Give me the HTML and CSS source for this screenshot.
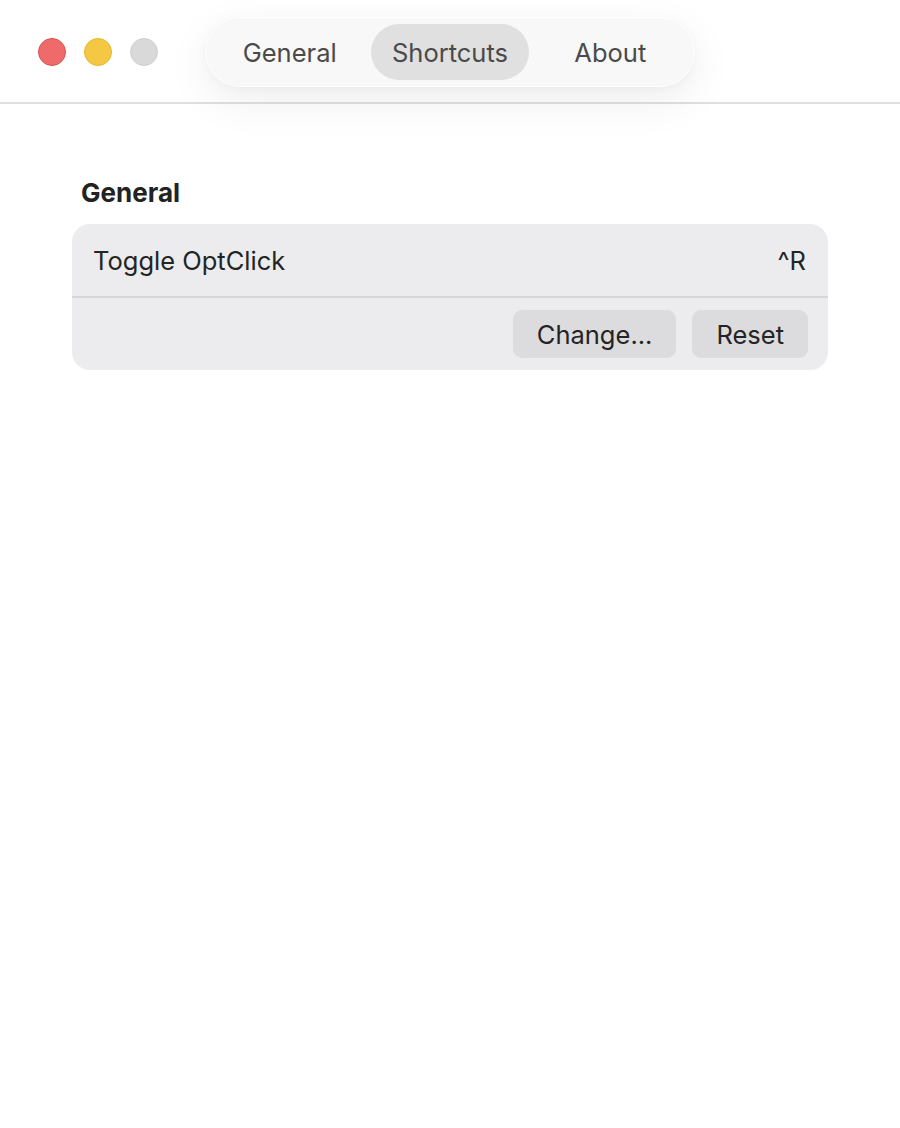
FILE: index.html
```html
<!DOCTYPE html>
<html lang="en">
  <head>
    <meta charset="UTF-8" />
    <meta name="viewport" content="width=device-width, initial-scale=1.0" />
    <title>OptClick Settings</title>
    <link rel="stylesheet" href="styles.css">
  </head>

  <body>
    <div class="window">
      <!-- title bar -->
      <header class="titlebar">
        <div class="lights">
          <span class="light light-close"></span>
          <span class="light light-min"></span>
          <span class="light light-zoom"></span>
        </div>
        <nav class="tabs">
          <span class="tab">General</span>
          <span class="tab active">Shortcuts</span>
          <span class="tab">About</span>
        </nav>
      </header>

      <!-- content -->
      <main class="content">
        <h2 class="section-title">General</h2>
        <div class="card">
          <div class="row">
            <span class="row-label">Toggle OptClick</span>
            <span class="row-key">^R</span>
          </div>
          <div class="row row-actions">
            <button class="btn">Change...</button>
            <button class="btn">Reset</button>
          </div>
        </div>
      </main>
    </div>
  </body>
</html>
```

FILE: styles.css
```css
*,
*::after,
*::before {
  padding: 0;
  margin: 0;
  box-sizing: border-box;
}
:root {
  --text: #242424;
  --tab-text: #4a4a4a;
  --card-bg: #ececee;
  --btn-bg: #dcdcde;
  --line: #d6d6d8;
}
html {
  font-family: Inter, "Noto Sans", sans-serif;
  color: var(--text);
}
body {
  background: #fff;
  width: 100%;
  min-height: 100vh;
}

/* title bar */
.titlebar {
  display: flex;
  align-items: center;
  height: 104px;
  padding: 2px 0 0 38px;
  border-bottom: 2px solid #e0e0e0;
  position: relative;
}
.lights {
  display: flex;
  gap: 18px;
}
.light {
  width: 28px;
  height: 28px;
  border-radius: 50%;
  display: block;
}
.light-close {
  background: #ef6a6a;
  border: 1px solid #e05050;
}
.light-min {
  background: #f4c842;
  border: 1px solid #e8b62c;
}
.light-zoom {
  background: #d9d9d9;
  border: 1px solid #cfcfcf;
}

/* segmented tabs */
.tabs {
  display: flex;
  gap: 3px;
  width: 490px;
  height: 70px;
  margin-left: 47px;
  padding: 6px 5px;
  background: #f8f8f8;
  border: 1px solid #fff;
  border-radius: 35px;
  box-shadow: 0 14px 44px rgba(0, 0, 0, 0.07), 0 2px 8px rgba(0, 0, 0, 0.03);
  z-index: 10;
}
.tab {
  flex: 1;
  display: flex;
  align-items: center;
  justify-content: center;
  font-size: 25.5px;
  color: var(--tab-text);
  border-radius: 28px;
}
.tab.active {
  background: #e0e0e0;
}

/* content */
.content {
  padding: 73px 72px 0;
}
.section-title {
  font-size: 26px;
  font-weight: 700;
  line-height: 32px;
  padding-left: 9px;
  margin-bottom: 15px;
  color: #222;
}
.card {
  background: var(--card-bg);
  border-radius: 18px;
  width: 756px;
}
.row {
  display: flex;
  align-items: center;
  justify-content: space-between;
  height: 72px;
  padding: 0 22px 0 21px;
  font-size: 25.5px;
}
.row + .row {
  height: 74px;
  border-top: 2px solid var(--line);
}
.row-actions {
  justify-content: flex-end;
  gap: 16px;
  padding-right: 20px;
}
.btn {
  font: inherit;
  color: var(--text);
  background: var(--btn-bg);
  border: none;
  border-radius: 9px;
  height: 48px;
  padding: 0 24px;
}
```
